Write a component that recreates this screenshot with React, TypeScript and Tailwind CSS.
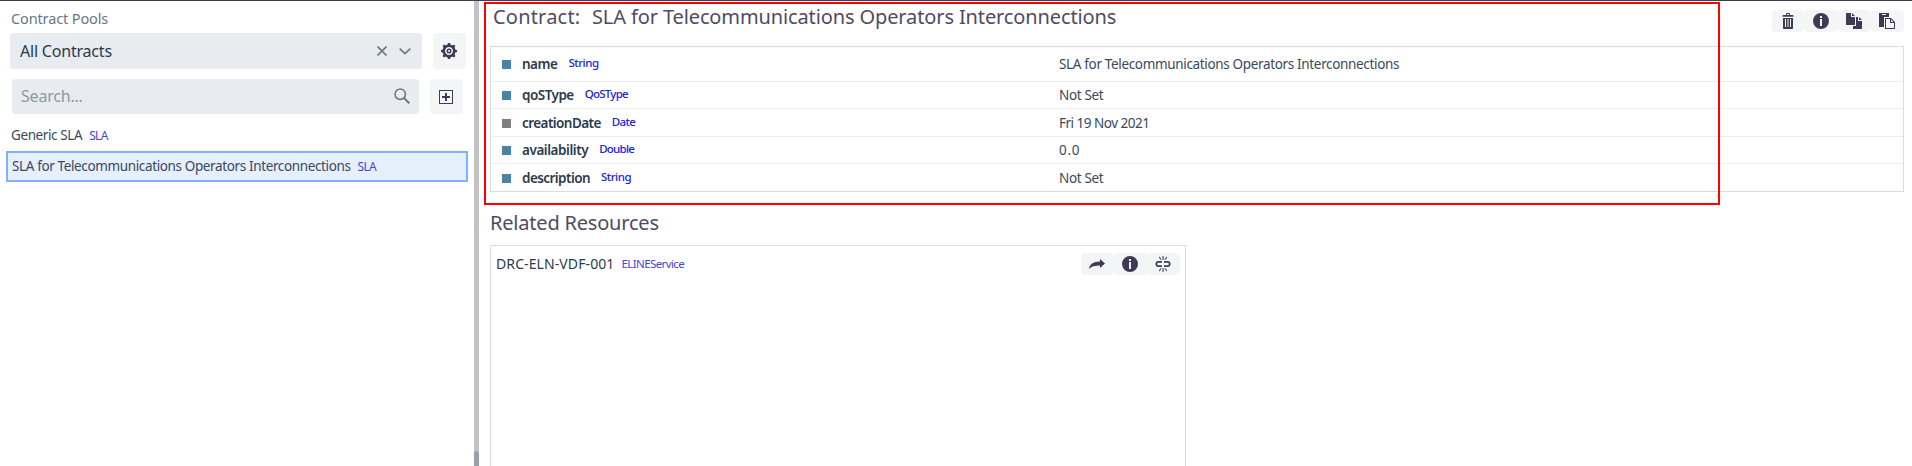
import type { ReactNode } from "react";

const paths = {
  cog: "M16 9v-2l-1.7-0.6c-0.2-0.6-0.4-1.2-0.7-1.8l0.8-1.6-1.4-1.4-1.6 0.8c-0.5-0.3-1.1-0.6-1.8-0.7l-0.6-1.7h-2l-0.6 1.7c-0.6 0.2-1.2 0.4-1.7 0.7l-1.6-0.8-1.5 1.5 0.8 1.6c-0.3 0.5-0.5 1.1-0.7 1.7l-1.7 0.6v2l1.7 0.6c0.2 0.6 0.4 1.2 0.7 1.8l-0.8 1.6 1.4 1.4 1.6-0.8c0.5 0.3 1.1 0.6 1.8 0.7l0.6 1.7h2l0.6-1.7c0.6-0.2 1.2-0.4 1.8-0.7l1.6 0.8 1.4-1.4-0.8-1.6c0.3-0.5 0.6-1.1 0.7-1.8l1.7-0.6zM8 12c-2.2 0-4-1.8-4-4s1.8-4 4-4 4 1.8 4 4-1.8 4-4 4zM10.5 8a2.5 2.5 0 1 1-5 0a2.5 2.5 0 1 1 5 0zM8 7a1 1 0 1 0 0 2a1 1 0 0 0 0-2z",
  plus: "M1 1v14h14V1zM14 14H2V2h12zM7 4h2v3h3v2H9v3H7V9H4V7h3z",
  trash:
    "M10 2V1c0-.6-.4-1-1-1H7c-.6 0-1 .4-1 1v1H3.500C2.900 2 2.500 2.400 2.500 3v.8h11V3c0-.6-.4-1-1-1H10zM7 1h2v1H7zM3 5v10c0 .6.4 1 1 1h8c.6 0 1-.4 1-1V5zM6 14H5V6h1zM8.5 14h-1V6h1zM11 14h-1V6h1z",
  info: "M8 0a8 8 0 1 0 0 16A8 8 0 0 0 8 0zM9 13H7V6h2zM9 5H7V3h2z",
  copy: "M0 0h5v4h4v8H0zM6 0l3 3H6zM10 4h2v4h4v8H7v-3h3zM13 4l3 3h-3z",
  paste: "M0 0h10v4H5v10H0zM3 1v1h4V1zM6 5h6l4 4v7H6zM7 6v9h8v-5h-4V6zM12 6.5V9h2.5z",
  share: "M16 7.500L11 3v2.500C4 5.500 .5 8.500 0 13C2.500 10.200 6 9.500 11 9.500V12z",
  unlink:
    "M3.500 5H7v1.700H3.500a1.300 1.300 0 0 0 0 2.600H7V11H3.500a3 3 0 0 1 0-6zM9 5h3.500a3 3 0 0 1 0 6H9V9.300h3.500a1.300 1.300 0 0 0 0-2.600H9zM7.500 0h1v4h-1zM7.500 12h1v4h-1zM3.800 1.300l.8-.6L6.600 3.400l-.8.6zM11.400.7l.8.6L10.200 4l-.8-.6zM5.800 12l.8.6L4.600 15.300l-.8-.6zM10.200 12l-.8.6L11.400 15.300l.8-.6z",
};

function Icon({ name }: { name: keyof typeof paths }) {
  return (
    <svg viewBox="0 0 16 16" className="size-4" fill="currentColor" fillRule="evenodd">
      <path d={paths[name]} />
    </svg>
  );
}

function IconButton({ name, size = "h-[22px]" }: { name: keyof typeof paths; size?: string }) {
  return (
    <button className={`flex w-[33px] shrink-0 items-center justify-center rounded bg-[#f3f5f7] pr-px text-[#403a55] ${size}`}>
      <Icon name={name} />
    </button>
  );
}

function Property({
  label,
  type,
  value,
  row,
  square = "bg-[#4c82a3]",
  tracking,
  typeTracking,
  valueTracking = "tracking-[-0.34px]",
}: {
  label: string;
  type: string;
  value: ReactNode;
  row: string;
  square?: string;
  tracking: string;
  typeTracking: string;
  valueTracking?: string;
}) {
  return (
    <div className={`flex items-center border-[#ebecef] pl-[11px] ${row}`}>
      <div className="flex w-[557px] items-center">
        <span className={`mt-px mr-[11px] size-[9px] ${square}`} />
        <span className={`text-[13.5px] leading-5 font-semibold text-[#2b3a4e] ${tracking}`}>{label}</span>
        <span className={`-mt-[2px] ml-[11px] text-[11.5px] leading-4 font-medium text-[#2222dd] ${typeTracking}`}>{type}</span>
      </div>
      <span className={`text-[13.5px] leading-5 text-[#3a495c] ${valueTracking}`}>{value}</span>
    </div>
  );
}

export default function App() {
  return (
    <div className="relative flex h-[466px] w-[1912px] flex-col overflow-hidden border-t border-[#403a55] bg-white font-['Noto_Sans','Open_Sans',sans-serif] whitespace-nowrap">
      <div className="flex min-h-0 flex-1">
        <aside className="w-[474px] shrink-0">
          <div className="h-8 pt-[7px] pl-[11px] text-[14.5px] leading-[20px] tracking-[-0.13px] text-[#67758a]">Contract Pools</div>
          <div className="flex gap-[11px] pl-[10px]">
            <div className="flex h-9 w-[412px] items-center rounded bg-[#e8ebef] pr-[11px] pl-[10px] text-[#6d7a8a]">
              <span className="flex-1 text-[16px] tracking-[-0.2px] text-[#2b3a4e]">All Contracts</span>
              <svg viewBox="0 0 10 10" className="mr-3 size-[10px]" fill="none" stroke="currentColor" strokeWidth="1.7">
                <path d="M.5.5l9 9M9.500.5l-9 9" />
              </svg>
              <svg viewBox="0 0 12 7" className="h-[7px] w-3" fill="none" stroke="currentColor" strokeWidth="1.7">
                <path d="M.7.7L6 5.700L11.300.7" />
              </svg>
            </div>
            <IconButton name="cog" size="h-9" />
          </div>
          <div className="mt-[10px] flex gap-[11px] pl-[12px]">
            <div className="flex h-[35px] w-[407px] items-center rounded bg-[#e8ebef] pr-[9px] pl-[9px] text-[#6d7a8a]">
              <span className="-mt-px flex-1 text-[16px] tracking-[-0.2px] text-[#8e98a5]">Search...</span>
              <svg viewBox="0 0 16 16" className="-mt-px size-4" fill="none" stroke="currentColor" strokeWidth="1.6">
                <circle cx="6.200" cy="6.200" r="5.200" />
                <path d="M10 10l5.300 5.300" strokeWidth="2" />
              </svg>
            </div>
            <IconButton name="plus" size="h-[35px]" />
          </div>
          <div className="mt-[9px] mb-[3px] flex h-[25px] items-center pl-[11px]">
            <span className="text-[13.5px] tracking-[-0.4px] text-[#3a495c]">Generic SLA</span>
            <span className="ml-[7px] text-[12px] tracking-[-0.65px] text-[#4444e0]">SLA</span>
          </div>
          <div className="ml-[6px] flex h-[31px] w-[462px] items-center border-2 border-[#80b3f8] bg-[#e6f0fd] pl-[4px]">
            <span className="text-[13.5px] tracking-[-0.37px] text-[#3a495c]">SLA for Telecommunications Operators Interconnections</span>
            <span className="ml-[7px] text-[12px] tracking-[-0.65px] text-[#4444e0]">SLA</span>
          </div>
        </aside>

        <div className="flex w-[5px] shrink-0 flex-col justify-end bg-[#c4c2c4]">
          <div className="h-[15px] rounded-t-sm bg-[#98a0ab]" />
        </div>

        <main className="flex-1 pr-2 pl-[11px]">
          <div className="flex h-[45px] items-start justify-between">
            <h1 className="flex pt-[2px] pl-[3px] text-[20px] leading-[28px] text-[#504a64]">
              <span className="w-[99px] tracking-[0.2px]">Contract:</span>
              <span className="tracking-[-0.12px]">SLA for Telecommunications Operators Interconnections</span>
            </h1>
            <div className="mt-[9px] flex">
              <IconButton name="trash" />
              <IconButton name="info" />
              <IconButton name="copy" />
              <IconButton name="paste" />
            </div>
          </div>
          <section className="h-[146px] border border-[#d9dbe0]">
            <Property label="name" type="String" value="SLA for Telecommunications Operators Interconnections" row="h-[35px] border-b pb-px" tracking="tracking-[-0.5px]" typeTracking="tracking-[-0.45px]" />
            <Property label="qoSType" type="QoSType" value="Not Set" row="h-[27px] border-b" tracking="tracking-[-0.52px]" typeTracking="tracking-[-0.75px]" />
            <Property label="creationDate" type="Date" value="Fri 19 Nov 2021" row="h-[28px] border-b" square="bg-[#808080]" tracking="tracking-[-0.56px]" typeTracking="tracking-[-0.7px]" valueTracking="tracking-[-0.5px]" />
            <Property label="availability" type="Double" value="0.0" row="h-[27px] border-b" tracking="tracking-[-0.45px]" typeTracking="tracking-[-0.75px]" valueTracking="tracking-[0.7px]" />
            <Property label="description" type="String" value="Not Set" row="h-[27px]" tracking="tracking-[-0.56px]" typeTracking="tracking-[-0.5px]" />
          </section>
          <h2 className="h-[53px] pt-[17px] text-[20px] leading-[28px] tracking-[-0.2px] text-[#504a64]">Related Resources</h2>
          <section className="flex h-[240px] w-[696px] items-start border border-[#d9dbe0] pt-[7px] pr-[5px] pl-[5px]">
            <div className="flex h-[22px] flex-1 items-center pb-px">
              <span className="text-[14px] tracking-[0.1px] text-[#2b3a4e]">DRC-ELN-VDF-001</span>
              <span className="ml-[7px] text-[11.5px] tracking-[-0.6px] text-[#4444e0]">ELINEService</span>
            </div>
            <IconButton name="share" />
            <IconButton name="info" />
            <IconButton name="unlink" />
          </section>
        </main>
      </div>
      <div className="pointer-events-none absolute top-px left-[484px] h-[203px] w-[1236px] border-2 border-[#ff0000]" />
    </div>
  );
}
